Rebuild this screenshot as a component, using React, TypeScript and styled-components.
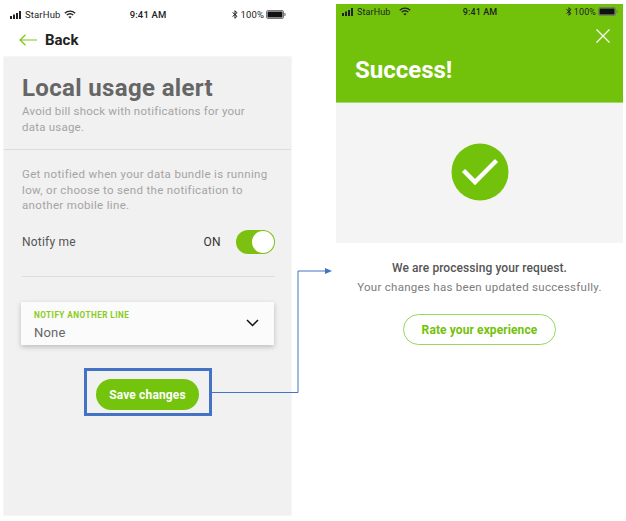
import styled, { createGlobalStyle } from "styled-components";

const GlobalStyle = createGlobalStyle`
  html, body {
    margin: 0;
    padding: 0;
    background: #ffffff;
    font-family: Roboto, "Liberation Sans", sans-serif;
    overflow: hidden;
  }
`;

const Page = styled.div`
  position: relative;
  width: 626px;
  height: 521px;
  display: flex;
  padding: 4px 3px 0 4px;
  box-sizing: border-box;
  justify-content: space-between;
`;

const Phone = styled.div`
  width: 287px;
  display: flex;
  flex-direction: column;
`;

const LeftPhone = styled(Phone)`
  padding-top: 3px;
`;

const StatusBar = styled.div<{ $size: number; $spread: number }>`
  height: 15px;
  display: grid;
  grid-template-columns: 1fr auto 1fr;
  align-items: center;
  padding: 0 5px 0 6px;
  font-size: ${(p) => p.$size}px;
  letter-spacing: ${(p) => p.$spread}px;
  color: #222;
`;

const StatusLeft = styled.div`
  display: flex;
  align-items: center;
  gap: 3px;
`;

const StatusRight = styled.div`
  display: flex;
  align-items: center;
  justify-content: flex-end;
  gap: 2px;
`;

const Clock = styled.span`
  font-weight: 500;
`;

const BackRow = styled.div`
  height: 35px;
  display: flex;
  align-items: center;
  gap: 8px;
  padding-left: 15px;
  font-size: 15px;
  font-weight: 700;
  color: #222;
`;

const Panel = styled.div`
  height: 458px;
  background: #f1f1f1;
  box-shadow: 0 0 0 1px #f6f6f6;
  display: flex;
  flex-direction: column;
`;

const Intro = styled.div`
  padding: 15px 18px 0;
  height: 93px;
  box-sizing: border-box;
  border-bottom: 1px solid #dcdcdc;
`;

const Title = styled.h1`
  margin: 0;
  font-size: 24px;
  line-height: 32px;
  font-weight: 700;
  color: #666;
  letter-spacing: 0.35px;
`;

const Lead = styled.p`
  margin: 0;
  font-size: 11.5px;
  line-height: 15.5px;
  color: #a4a4a4;
  letter-spacing: 0.22px;
`;

const Settings = styled.div`
  padding: 17px 16px 0 18px;
  display: flex;
  flex-direction: column;
`;

const Help = styled(Lead)`
  letter-spacing: 0.33px;
`;

const NotifyRow = styled.div`
  display: flex;
  align-items: center;
  margin-top: 15px;
  height: 26px;
  font-size: 12px;
  font-weight: 400;
  color: #555;
  letter-spacing: 0.2px;
  padding-bottom: 21px;
  border-bottom: 1px solid #dcdcdc;
`;

const NotifyLabel = styled.span`
  flex: 1;
`;

const OnLabel = styled.span`
  color: #333;
  margin-right: 15px;
  letter-spacing: 0.4px;
`;

const Toggle = styled.span`
  width: 39px;
  height: 24px;
  border-radius: 12px;
  background: #7cc111;
  display: flex;
  justify-content: flex-end;
  align-items: center;
  padding-right: 1px;
  box-sizing: border-box;
`;

const Knob = styled.span`
  width: 22px;
  height: 22px;
  border-radius: 50%;
  background: #ffffff;
`;

const Select = styled.div`
  margin: 25px 17px 0 17px;
  height: 43px;
  background: #fbfbfb;
  box-shadow: 0 2px 5px rgba(0, 0, 0, 0.22);
  display: flex;
  align-items: center;
  justify-content: space-between;
  padding: 0 15px 0 13px;
`;

const SelectText = styled.div`
  padding-top: 5px;
`;

const SelectLabel = styled.div`
  font-size: 8.2px;
  font-weight: 700;
  line-height: 11px;
  color: #8ccb1e;
  letter-spacing: 0.45px;
`;

const SelectValue = styled.div`
  margin-top: 3px;
  font-size: 13px;
  line-height: 18px;
  color: #666;
  letter-spacing: 0.2px;
`;

const SaveWrap = styled.div`
  align-self: center;
  margin-top: 23px;
  margin-left: 1px;
  border: 3px solid #4472c4;
  padding: 8px 10px 3px 9px;
  display: flex;
`;

const SaveButton = styled.button`
  width: 103px;
  height: 31px;
  border: none;
  border-radius: 16px;
  background: #74c30c;
  color: #ffffff;
  font-family: inherit;
  font-size: 12px;
  font-weight: 700;
  letter-spacing: 0.15px;
  padding: 2px 0 0;
`;

const SuccessHeader = styled.div`
  height: 99px;
  background: #72c20b;
  display: flex;
  flex-direction: column;
  border-bottom: 1px solid #a4da6a;
  box-sizing: border-box;
`;

const CloseRow = styled.div`
  display: flex;
  justify-content: flex-end;
  padding: 10px 13px 0 0;
  height: 14px;
`;

const SuccessTitle = styled.h2`
  margin: 12px 0 0 19px;
  font-size: 24px;
  line-height: 30px;
  font-weight: 700;
  color: #ffffff;
  letter-spacing: 0;
`;

const CheckArea = styled.div`
  height: 140px;
  padding-bottom: 2px;
  box-sizing: border-box;
  background: #f4f4f4;
  display: flex;
  align-items: center;
  justify-content: center;
`;

const Message = styled.div`
  display: flex;
  flex-direction: column;
  align-items: center;
  padding-top: 16px;
`;

const MessageTitle = styled.div`
  font-size: 12px;
  line-height: 19px;
  font-weight: 500;
  color: #555;
  letter-spacing: 0.08px;
`;

const MessageBody = styled.div`
  font-size: 11.5px;
  line-height: 19px;
  color: #7c7c7c;
  letter-spacing: 0.28px;
`;

const RateButton = styled.button`
  margin-top: 17px;
  width: 153px;
  height: 31px;
  border: 1px solid #9bd65c;
  border-radius: 16px;
  background: #ffffff;
  color: #72c20b;
  font-family: inherit;
  font-size: 12px;
  font-weight: 700;
  letter-spacing: 0.1px;
  padding: 1px 0 0;
`;

const Connector = styled.svg`
  position: absolute;
  left: 0;
  top: 0;
  pointer-events: none;
`;

function Signal() {
  return (
    <svg width="12" height="8" viewBox="0 0 12 8">
      <rect x="0" y="5" width="2" height="3" fill="#222" />
      <rect x="3" y="3.5" width="2" height="4.5" fill="#222" />
      <rect x="6" y="2" width="2" height="6" fill="#222" />
      <rect x="9" y="0" width="2" height="8" fill="#222" />
    </svg>
  );
}

function Wifi() {
  return (
    <svg width="12" height="9" viewBox="0 0 12 9" fill="none" stroke="#222" strokeWidth="1.3">
      <path d="M0.8 3.2C3.8 0.4 8.2 0.4 11.2 3.2" />
      <path d="M2.7 5.1C4.6 3.5 7.4 3.5 9.3 5.1" />
      <path d="M6 8.6L4.3 6.8C5.3 6 6.7 6 7.7 6.8Z" fill="#222" stroke="none" />
    </svg>
  );
}

function Bluetooth() {
  return (
    <svg width="6" height="9" viewBox="0 0 6 9" fill="none" stroke="#222" strokeWidth="1">
      <path d="M0.5 2.4L5 6.3L3 8.3V0.7L5 2.7L0.5 6.6" />
    </svg>
  );
}

function Battery() {
  return (
    <svg width="20" height="9" viewBox="0 0 20 9">
      <rect x="0.5" y="0.5" width="17" height="8" rx="1.5" fill="none" stroke="#777" />
      <rect x="1.5" y="1.5" width="15" height="6" rx="0.5" fill="#111" />
      <rect x="18.3" y="3" width="1.2" height="3" fill="#777" />
    </svg>
  );
}

function Status({ wideGap, size, spread }: { wideGap?: boolean; size: number; spread: number }) {
  return (
    <StatusBar $size={size} $spread={spread}>
      <StatusLeft>
        <Signal />
        <span>StarHub</span>
        {wideGap ? <span>&nbsp;</span> : null}
        <Wifi />
      </StatusLeft>
      <Clock>9:41 AM</Clock>
      <StatusRight>
        <Bluetooth />
        <span>100%</span>
        <Battery />
      </StatusRight>
    </StatusBar>
  );
}

export default function App() {
  return (
    <>
      <GlobalStyle />
      <Page>
        <LeftPhone>
          <Status size={9.5} spread={0.15} />
          <BackRow>
            <svg width="18" height="12" viewBox="0 0 18 12" fill="none" stroke="#7cc813" strokeWidth="1.2">
              <path d="M18 6H1M6.5 0.8L1 6L6.5 11.2" />
            </svg>
            Back
          </BackRow>
          <Panel>
            <Intro>
              <Title>Local usage alert</Title>
              <Lead>
                Avoid bill shock with notifications for your
                <br />
                data usage.
              </Lead>
            </Intro>
            <Settings>
              <Help>
                Get notified when your data bundle is running
                <br />
                low, or choose to send the notification to
                <br />
                another mobile line.
              </Help>
              <NotifyRow>
                <NotifyLabel>Notify me</NotifyLabel>
                <OnLabel>ON</OnLabel>
                <Toggle>
                  <Knob />
                </Toggle>
              </NotifyRow>
            </Settings>
            <Select>
              <SelectText>
                <SelectLabel>NOTIFY ANOTHER LINE</SelectLabel>
                <SelectValue>None</SelectValue>
              </SelectText>
              <svg width="13" height="8" viewBox="0 0 13 8" fill="none" stroke="#111" strokeWidth="1.5">
                <path d="M1 1L6.5 6.5L12 1" />
              </svg>
            </Select>
            <SaveWrap>
              <SaveButton>Save changes</SaveButton>
            </SaveWrap>
          </Panel>
        </LeftPhone>
        <Phone>
          <SuccessHeader>
            <Status wideGap size={9} spread={0.1} />
            <CloseRow>
              <svg width="14" height="14" viewBox="0 0 14 14" stroke="#fff" strokeWidth="1.2">
                <path d="M0.5 0.5L13.5 13.5M13.5 0.5L0.5 13.5" />
              </svg>
            </CloseRow>
            <SuccessTitle>Success!</SuccessTitle>
          </SuccessHeader>
          <CheckArea>
            <svg width="58" height="58" viewBox="0 0 58 58">
              <circle cx="29" cy="29" r="28.5" fill="#72c20b" />
              <path d="M12.5 27.5L24 39L45.5 17.5" fill="none" stroke="#fff" strokeWidth="4.5" />
            </svg>
          </CheckArea>
          <Message>
            <MessageTitle>We are processing your request.</MessageTitle>
            <MessageBody>Your changes has been updated successfully.</MessageBody>
            <RateButton>Rate your experience</RateButton>
          </Message>
        </Phone>
        <Connector width="626" height="521" viewBox="0 0 626 521">
          <path d="M212 392.5H298V271H327" fill="none" stroke="#4472c4" strokeWidth="1" />
          <path d="M325 268L332 271L325 274Z" fill="#4472c4" />
        </Connector>
      </Page>
    </>
  );
}
